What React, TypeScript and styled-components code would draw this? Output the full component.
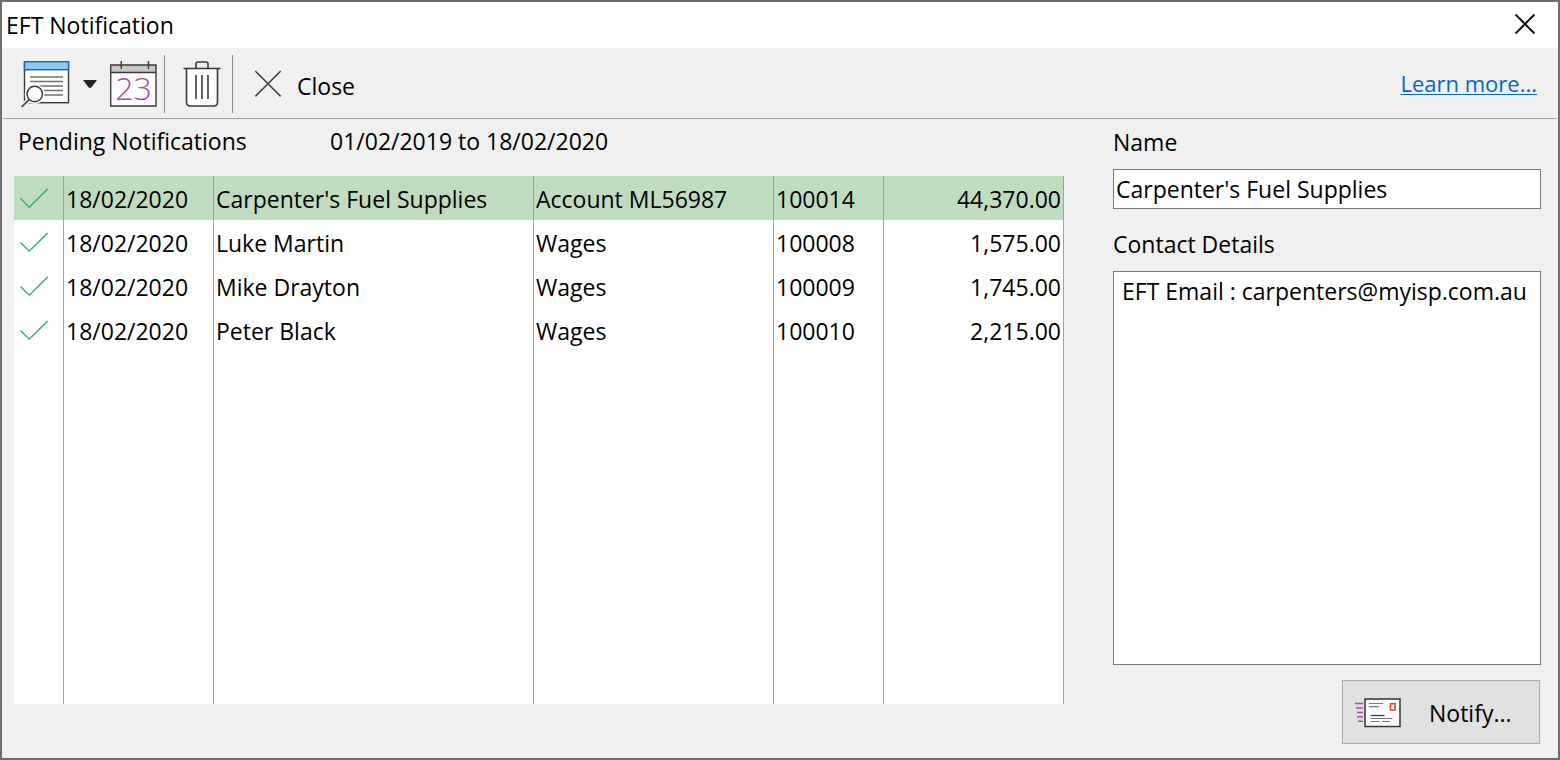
import React from 'react';
import styled, { createGlobalStyle } from 'styled-components';

const GlobalStyle = createGlobalStyle`
  *, *::before, *::after { box-sizing: border-box; }
  body {
    margin: 0;
    background: #f0f0f0;
  }
  body, button, input, textarea {
    font-family: "Segoe UI", "Open Sans", "Noto Sans", sans-serif;
    font-size: 23px;
    line-height: 32px;
    color: #000;
  }
`;

const Dialog = styled.div`
  display: flex;
  flex-direction: column;
  min-height: 100vh;
  border: 2px solid #6e6e6e;
  background: #f0f0f0;
`;

const TitleBar = styled.header`
  display: flex;
  align-items: center;
  justify-content: space-between;
  height: 46px;
  padding: 0 22px 2px 4px;
  background: #fff;
`;

const Title = styled.h1`
  margin: 0;
  padding-top: 2px;
  font-size: 23px;
  font-weight: 400;
`;

const IconButton = styled.button`
  display: flex;
  align-items: center;
  padding: 0;
  border: 0;
  background: transparent;
  cursor: pointer;
`;

const Toolbar = styled.div`
  display: flex;
  align-items: center;
  height: 71px;
  margin: 0 1px;
  padding: 2px 20px 0 18px;
  border-bottom: 1px solid #a0a0a0;
`;

const ToolGroup = styled.div<{ $gap: number; $padding: string }>`
  display: flex;
  align-items: center;
  gap: ${(p) => p.$gap}px;
  padding: ${(p) => p.$padding};
`;

const Separator = styled.div`
  width: 1px;
  height: 58px;
  background: #8c8c8c;
`;

const CloseButton = styled(IconButton)`
  gap: 15px;
`;

const ButtonText = styled.span`
  padding-top: 4px;
`;

const HelpLink = styled.a`
  margin-left: auto;
  padding-bottom: 2px;
  font-size: 22px;
  color: #0067d0;
  text-decoration: underline;
  text-decoration-thickness: 1px;
  text-underline-offset: 2px;
`;

const Body = styled.main`
  flex: 1;
  display: grid;
  grid-template-columns: minmax(0, 1050fr) minmax(0, 428fr);
  column-gap: 49px;
  padding: 6px 17px 14px 12px;
`;

const ListPane = styled.section`
  display: flex;
  flex-direction: column;
  padding-bottom: 40px;
`;

const ListHeading = styled.div`
  display: flex;
  height: 51px;
  padding-left: 4px;
`;

const Heading = styled.h2`
  width: 312px;
  margin: 0;
  font-size: 23px;
  font-weight: 400;
`;

const Table = styled.table`
  flex: 1;
  width: 100%;
  table-layout: fixed;
  border-collapse: separate;
  border-spacing: 0;
  background: #fff;
`;

const Col = styled.col<{ $share: number }>`
  width: ${(p) => p.$share}%;
`;

const Row = styled.tr<{ $selected?: boolean }>`
  height: 44px;
  background: ${(p) => (p.$selected ? '#c0dcc0' : 'transparent')};
`;

const FillerRow = styled.tr`
  height: auto;
`;

const Cell = styled.td<{ $align?: 'left' | 'right' }>`
  padding: 2px 2px 0;
  border-right: 1px solid #a0a0a0;
  text-align: ${(p) => p.$align ?? 'left'};
  white-space: nowrap;
  overflow: hidden;
`;

const TickCell = styled(Cell)`
  padding: 0 0 0 5px;

  svg {
    display: block;
  }
`;

const DetailPane = styled.section`
  display: flex;
  flex-direction: column;
`;

const Label = styled.label`
  height: 36px;
  margin-bottom: 8px;
  padding-top: 1px;
`;

const NameInput = styled.input`
  width: 100%;
  height: 40px;
  margin-bottom: 18px;
  padding: 0 2px;
  border: 1px solid #7a7a7a;
  border-radius: 0;
  background: #fff;
`;

const ContactBox = styled.textarea`
  flex: 1;
  width: 100%;
  padding: 3px 8px;
  border: 1px solid #7a7a7a;
  border-radius: 0;
  background: #fff;
  resize: none;
`;

const NotifyButton = styled.button`
  display: flex;
  align-items: center;
  align-self: flex-end;
  gap: 27px;
  width: 198px;
  height: 64px;
  margin: 15px 1px 0 0;
  padding: 2px 12px 0;
  border: 1px solid #adadad;
  background: #e1e1e1;
  cursor: pointer;
`;

const DialogCloseIcon = () => (
  <svg width="22" height="22" viewBox="0 0 22 22" aria-hidden="true">
    <path d="M1.5 1.5l19 19M20.5 1.5l-19 19" stroke="#111" strokeWidth="2" fill="none" />
  </svg>
);

const PreviewIcon = () => (
  <svg width="49" height="48" viewBox="0 0 49 48" fill="none" aria-hidden="true">
    <rect x="3.500" y="1.700" width="44" height="41" fill="#fdfdfd" stroke="#3a3a3a" strokeWidth="1.4" />
    <rect x="3.500" y="1.700" width="44" height="8" fill="#92c8ec" stroke="#0f6ab4" strokeWidth="1.4" />
    <path d="M9 17h33M9 21.5h33M9 26h33M9 30.5h33M9 35h33" stroke="#727272" strokeWidth="1.3" />
    <path d="M13.7 34L0 48" stroke="#f0f0f0" strokeWidth="5" />
    <circle cx="13.7" cy="34" r="10" fill="#fdfdfd" />
    <circle cx="13.7" cy="34" r="7.7" fill="#fdfdfd" stroke="#3a3a3a" strokeWidth="1.5" />
    <path d="M8.2 39.6L.6 47" stroke="#3a3a3a" strokeWidth="1.6" />
  </svg>
);

const CaretIcon = () => (
  <svg width="14" height="8" viewBox="0 0 14 8" aria-hidden="true">
    <path d="M0 0h14L8.5 7.2Q7 8.6 5.5 7.2z" fill="#222" />
  </svg>
);

const CalendarIcon = () => (
  <svg width="48" height="48" viewBox="0 0 48 48" fill="none" aria-hidden="true">
    <rect x="0.700" y="5" width="45.300" height="41" fill="#fdfdfd" />
    <rect x="0.700" y="5" width="45.300" height="7.5" fill="#c8c6c6" />
    <path d="M.7 12.500h45.300M.7 5h45.300v41H.7z" stroke="#3a3a3a" strokeWidth="1.4" />
    <path d="M11.300 1v8M38.500 1v8" stroke="#3a3a3a" strokeWidth="1.4" />
    <text x="23.5" y="40" textAnchor="middle" fontFamily="Open Sans, sans-serif" fontWeight="300" fontSize="32" fill="#a350a3">
      23
    </text>
  </svg>
);

const TrashIcon = () => (
  <svg width="38" height="48" viewBox="0 0 38 48" fill="none" stroke="#3a3a3a" strokeWidth="1.6" aria-hidden="true">
    <path d="M3.5 8.500V42q0 4 4 4h23q4 0 4-4V8.500" fill="#fdfdfd" />
    <path d="M.5 8.500h37M13 8V4q0-2 2-2h8q2 0 2 2v4" />
    <path d="M13 15v24M19 15v24M25 15v24" />
  </svg>
);

const CrossIcon = () => (
  <svg width="28" height="28" viewBox="0 0 28 28" fill="none" aria-hidden="true">
    <path d="M1.300 1l25.400 25.400M26.700 1L1.300 26.400" stroke="#4a4a4a" strokeWidth="1.700" />
  </svg>
);

const TickIcon = () => (
  <svg width="30" height="22" viewBox="0 0 30 22" fill="none" role="img" aria-label="Selected">
    <path d="M1.500 11.500l8.800 8.700L28.700 2" stroke="#22ad5c" strokeWidth="1.300" />
  </svg>
);

const MailIcon = () => (
  <svg width="47" height="30" viewBox="0 0 47 30" fill="none" aria-hidden="true">
    <path d="M0 5.500h8M1 10h7M2 14.500h6M2 18.700h6M3 23.200h5" stroke="#a350a3" strokeWidth="1.400" />
    <rect x="10" y="1" width="35" height="27.500" fill="#fdfdfd" stroke="#333" strokeWidth="1.500" />
    <path d="M14 5.500h14M14 8.700h10M15.500 20.500h22M15.500 23.500h9M27 23.500h8" stroke="#777" strokeWidth="1.200" />
    <path d="M15.500 17.500h14" stroke="#333" strokeWidth="1.200" />
    <rect x="35.500" y="5.700" width="4.600" height="6.300" stroke="#e8413c" strokeWidth="1.600" />
  </svg>
);

const columns = [50, 150, 320, 240, 110, 180];
const totalShare = columns.reduce((sum, share) => sum + share, 0);

const notifications = [
  { date: '18/02/2020', payee: "Carpenter's Fuel Supplies", detail: 'Account ML56987', ref: '100014', amount: '44,370.00' },
  { date: '18/02/2020', payee: 'Luke Martin', detail: 'Wages', ref: '100008', amount: '1,575.00' },
  { date: '18/02/2020', payee: 'Mike Drayton', detail: 'Wages', ref: '100009', amount: '1,745.00' },
  { date: '18/02/2020', payee: 'Peter Black', detail: 'Wages', ref: '100010', amount: '2,215.00' },
];

export default function App() {
  return (
    <>
      <GlobalStyle />
      <Dialog role="dialog" aria-labelledby="dialog-title">
        <TitleBar>
          <Title id="dialog-title">EFT Notification</Title>
          <IconButton type="button" aria-label="Close window">
            <DialogCloseIcon />
          </IconButton>
        </TitleBar>

        <Toolbar role="toolbar" aria-label="Notification actions">
          <ToolGroup $gap={13} $padding="0 6px 0 0">
            <IconButton type="button" aria-label="Preview">
              <PreviewIcon />
            </IconButton>
            <IconButton type="button" aria-label="Preview options">
              <CaretIcon />
            </IconButton>
            <IconButton type="button" aria-label="Date range">
              <CalendarIcon />
            </IconButton>
          </ToolGroup>
          <Separator />
          <ToolGroup $gap={0} $padding="0 11px 0 18px">
            <IconButton type="button" aria-label="Delete">
              <TrashIcon />
            </IconButton>
          </ToolGroup>
          <Separator />
          <ToolGroup $gap={0} $padding="0 0 0 21px">
            <CloseButton type="button">
              <CrossIcon />
              <ButtonText>Close</ButtonText>
            </CloseButton>
          </ToolGroup>
          <HelpLink href="#learn-more">Learn more...</HelpLink>
        </Toolbar>

        <Body>
          <ListPane>
            <ListHeading>
              <Heading>Pending Notifications</Heading>
              <span>01/02/2019 to 18/02/2020</span>
            </ListHeading>
            <Table aria-label="Pending notifications">
              <colgroup>
                {columns.map((share, i) => (
                  <Col key={i} $share={(share / totalShare) * 100} />
                ))}
              </colgroup>
              <tbody>
                {notifications.map((n, i) => (
                  <Row key={n.ref} $selected={i === 0}>
                    <TickCell>
                      <TickIcon />
                    </TickCell>
                    <Cell>{n.date}</Cell>
                    <Cell>{n.payee}</Cell>
                    <Cell>{n.detail}</Cell>
                    <Cell>{n.ref}</Cell>
                    <Cell $align="right">{n.amount}</Cell>
                  </Row>
                ))}
                <FillerRow aria-hidden="true">
                  {columns.map((_, i) => (
                    <Cell key={i} />
                  ))}
                </FillerRow>
              </tbody>
            </Table>
          </ListPane>

          <DetailPane>
            <Label htmlFor="contact-name">Name</Label>
            <NameInput id="contact-name" type="text" defaultValue="Carpenter's Fuel Supplies" />
            <Label htmlFor="contact-details">Contact Details</Label>
            <ContactBox id="contact-details" defaultValue="EFT Email : carpenters@myisp.com.au" spellCheck={false} />
            <NotifyButton type="button">
              <MailIcon />
              Notify...
            </NotifyButton>
          </DetailPane>
        </Body>
      </Dialog>
    </>
  );
}
